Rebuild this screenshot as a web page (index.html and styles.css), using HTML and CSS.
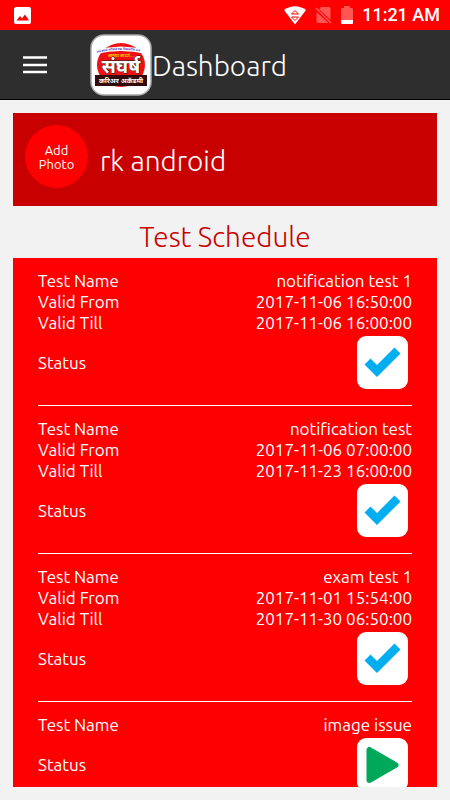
FILE: index.html
```html
<!DOCTYPE html>
<html lang="en">
<head>
<meta charset="utf-8">
<meta name="viewport" content="width=device-width, initial-scale=1">
<title>Dashboard</title>
<link rel="stylesheet" href="styles.css">
</head>
<body>
<svg class="defs" aria-hidden="true">
  <symbol id="check" viewBox="0 0 51 53"><path fill="#03aef0" d="M7.500 28.500l6-6 6.500 6.500L37.500 11.500l6 6L20 41z"/></symbol>
  <symbol id="play" viewBox="0 0 51 53"><path fill="#00a859" stroke="#00a859" stroke-width="6" stroke-linejoin="round" d="M12.500 12v30l26-15z"/></symbol>
</svg>
<div class="statusbar">
  <svg width="17" height="17" viewBox="0 0 17 17" aria-hidden="true"><rect width="17" height="17" rx="2" fill="#fff"/><path fill="#f00" d="M2.500 13.500l3.500-4.500 2 2.500 3-4 4 6z"/></svg>
  <div class="system">
    <svg width="22" height="19" viewBox="0 0 22 19" aria-hidden="true"><path fill="#fff" d="M0 4Q11-3.500 22 4L11 18.500z"/><path fill="none" stroke="#f00" stroke-width="1" d="M7.500 8L11 4.500 14.500 8zM7.500 11h7L11 14.500z"/></svg>
    <svg width="17" height="18" viewBox="0 0 17 18" aria-hidden="true"><path fill="#ff5555" d="M6 1h8q1.500 0 1.500 1.500V14L4 3zM1.500 6l12 11H3q-1.500 0-1.500-1.500z"/><path stroke="#ff5555" stroke-width="1.500" d="M1 2l15 15"/></svg>
    <svg width="12" height="18" viewBox="0 0 12 18" aria-hidden="true"><path fill="#ff5555" d="M0 3q0-1 1-1h2V0h6v2h2q1 0 1 1v11H0z"/><path fill="#fff" d="M0 14h12v3q0 1-1 1H1q-1 0-1-1z"/></svg>
    <span class="clock">11:21 AM</span>
  </div>
</div>
<header class="appbar">
  <button class="menu" aria-label="Menu"><svg width="24" height="18" viewBox="0 0 24 18"><path stroke="#fff" stroke-width="2.500" d="M0 1.500h24M0 9h24M0 16h24"/></svg></button>
  <svg class="logo" width="62" height="62" viewBox="0 0 62 62" role="img" aria-label="संघर्ष करिअर अकॅडमी">
    <rect x="1" y="1" width="60" height="60" rx="13" fill="#fff" stroke="#aaa" stroke-width="1.500"/>
    <ellipse cx="31" cy="31" rx="24" ry="22" fill="#ef1016"/>
    <path d="M6 16Q31 9 56 16v4Q31 14 6 20z" fill="#fff"/>
    <path id="arc" d="M7 19Q31 13 57 19" fill="none"/>
    <text class="logo-arc"><textPath href="#arc">सर्व स्पर्धा परीक्षेचे एक विश्वसनीय नाव</textPath></text>
    <text class="logo-sub" x="31" y="23">आमुचा आदर्श....</text>
    <text class="logo-name" x="31" y="39">संघर्ष</text>
    <rect x="5" y="41" width="52" height="11" fill="#320b0b"/>
    <text class="logo-band" x="31" y="49">करिअर अकॅडमी</text>
  </svg>
  <h1>Dashboard</h1>
</header>
<main>
  <section class="profile">
    <button class="photo">Add<br>Photo</button>
    <p class="user">rk android</p>
  </section>
  <h2>Test Schedule</h2>
  <section class="tests">
    <dl class="test">
      <div class="row"><dt>Test Name</dt><dd>notification test 1</dd></div>
      <div class="row"><dt>Valid From</dt><dd>2017-11-06 16:50:00</dd></div>
      <div class="row"><dt>Valid Till</dt><dd>2017-11-06 16:00:00</dd></div>
      <div class="row status"><dt>Status</dt><dd><button class="state" aria-label="Completed"><svg width="51" height="53"><use href="#check"/></svg></button></dd></div>
    </dl>
    <dl class="test">
      <div class="row"><dt>Test Name</dt><dd>notification test</dd></div>
      <div class="row"><dt>Valid From</dt><dd>2017-11-06 07:00:00</dd></div>
      <div class="row"><dt>Valid Till</dt><dd>2017-11-23 16:00:00</dd></div>
      <div class="row status"><dt>Status</dt><dd><button class="state" aria-label="Completed"><svg width="51" height="53"><use href="#check"/></svg></button></dd></div>
    </dl>
    <dl class="test">
      <div class="row"><dt>Test Name</dt><dd>exam test 1</dd></div>
      <div class="row"><dt>Valid From</dt><dd>2017-11-01 15:54:00</dd></div>
      <div class="row"><dt>Valid Till</dt><dd>2017-11-30 06:50:00</dd></div>
      <div class="row status"><dt>Status</dt><dd><button class="state" aria-label="Completed"><svg width="51" height="53"><use href="#check"/></svg></button></dd></div>
    </dl>
    <dl class="test">
      <div class="row"><dt>Test Name</dt><dd>image issue</dd></div>
      <div class="row status"><dt>Status</dt><dd><button class="state" aria-label="Start test"><svg width="51" height="53"><use href="#play"/></svg></button></dd></div>
    </dl>
  </section>
</main>
</body>
</html>
```
FILE: styles.css
```css
* { box-sizing: border-box; }
body {
  margin: 0;
  height: 100vh;
  display: flex;
  flex-direction: column;
  background: #f2f2f2;
  color: #fff;
  font-family: Ubuntu, "Open Sans", "Noto Sans", sans-serif;
  font-size: 17px;
  line-height: 21px;
}
h1, h2, p, dl, dd { margin: 0; }
button { padding: 0; border: 0; color: inherit; font: inherit; cursor: pointer; }
svg { display: block; }
.defs { display: none; }
.statusbar {
  height: 30px;
  flex: none;
  display: flex;
  align-items: center;
  justify-content: space-between;
  padding: 0 10px 0 14px;
  background: #f00;
}
.system { display: flex; align-items: center; gap: 9px; }
.clock { font: 500 18px/30px Roboto, sans-serif; }
.appbar {
  height: 70px;
  flex: none;
  display: flex;
  align-items: center;
  padding-left: 23px;
  background: #2e2e2e;
  border-bottom: 1px solid #000;
}
.menu { background: none; margin-right: 43px; }
.logo { flex: none; }
h1, h2, .user { font-size: 28px; line-height: 32px; font-weight: 300; }
h1, .user { padding-top: 2px; }
.logo text { text-anchor: middle; font-family: "Noto Sans Devanagari", "Noto Sans", sans-serif; font-weight: 700; }
.logo .logo-arc { text-anchor: start; font-size: 3px; fill: #4a3fc0; }
.logo .logo-sub { font-size: 4px; fill: #ffc400; }
.logo .logo-name { font-size: 19px; fill: #fff; stroke: #222; stroke-width: 1px; paint-order: stroke; }
.logo .logo-band { font-size: 7px; fill: #fff; }
main {
  flex: 1;
  min-height: 0;
  display: flex;
  flex-direction: column;
  padding: 13px;
}
.profile {
  flex: none;
  display: flex;
  align-items: flex-start;
  gap: 12px;
  padding: 12px;
  min-height: 93px;
  background: #c80000;
}
.photo {
  width: 63px;
  height: 63px;
  border-radius: 50%;
  background: #f00;
  font-size: 13px;
  line-height: 14px;
}
.user { align-self: center; }
h2 { color: #c80000; text-align: center; padding: 15px 0 5px; }
.tests { flex: 1; min-height: 0; overflow: hidden; padding: 0 25px; background: #f00; }
.test { padding: 12px 0 16px; border-bottom: 1px solid #fff; }
.row { display: flex; justify-content: space-between; }
.status { align-items: center; padding: 3px 4px 0 0; }
.state { display: block; background: #fff; border-radius: 9px; }
```
